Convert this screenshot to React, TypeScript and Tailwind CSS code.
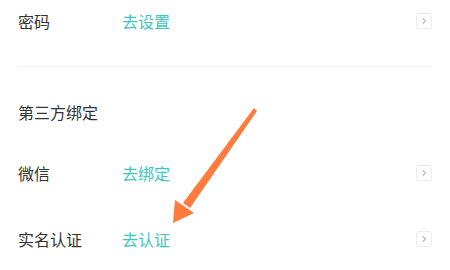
import React from 'react';

const font = { fontFamily: '"Noto Sans CJK SC", "Noto Sans", sans-serif' };

function Chevron() {
  return (
    <div className="w-[16px] h-[16px] rounded-[3px] border border-[#ececec] flex items-center justify-center">
      <svg width="8" height="8" viewBox="0 0 8 8" fill="none">
        <path d="M3 1.5 L5.5 4 L3 6.5" stroke="#8a8a8a" strokeWidth="1" strokeLinecap="round" strokeLinejoin="round" />
      </svg>
    </div>
  );
}

function Row({ label, action, height }: { label: string; action: string; height: string }) {
  return (
    <div className={`flex items-center ${height}`}>
      <div className="w-[104px] text-[16px] text-[#333333]">{label}</div>
      <div className="flex-1 text-[16px] text-[#3ec6bd]">{action}</div>
      <Chevron />
    </div>
  );
}

export default function App() {
  return (
    <div className="relative w-[450px] h-[270px] bg-white overflow-hidden" style={font}>
      <div className="px-[18px]">
        <Row label="密码" action="去设置" height="h-[42px]" />
        <div className="mt-[24px] h-px bg-[#f2f2f2]" />
        <div className="h-[73px] pt-[35px] text-[16px] leading-[20px] text-[#333333]">第三方绑定</div>
        <Row label="微信" action="去绑定" height="h-[66px]" />
        <Row label="实名认证" action="去认证" height="h-[66px]" />
      </div>

      {/* annotation arrow */}
      <svg className="absolute left-0 top-0 pointer-events-none" width="450" height="270" viewBox="0 0 450 270">
        <polygon points="254,108 257,111 190,208 183,203" fill="#ff7a3d" />
        <polygon points="173,223 175,200 194,213" fill="#ff7a3d" />
      </svg>
    </div>
  );
}
